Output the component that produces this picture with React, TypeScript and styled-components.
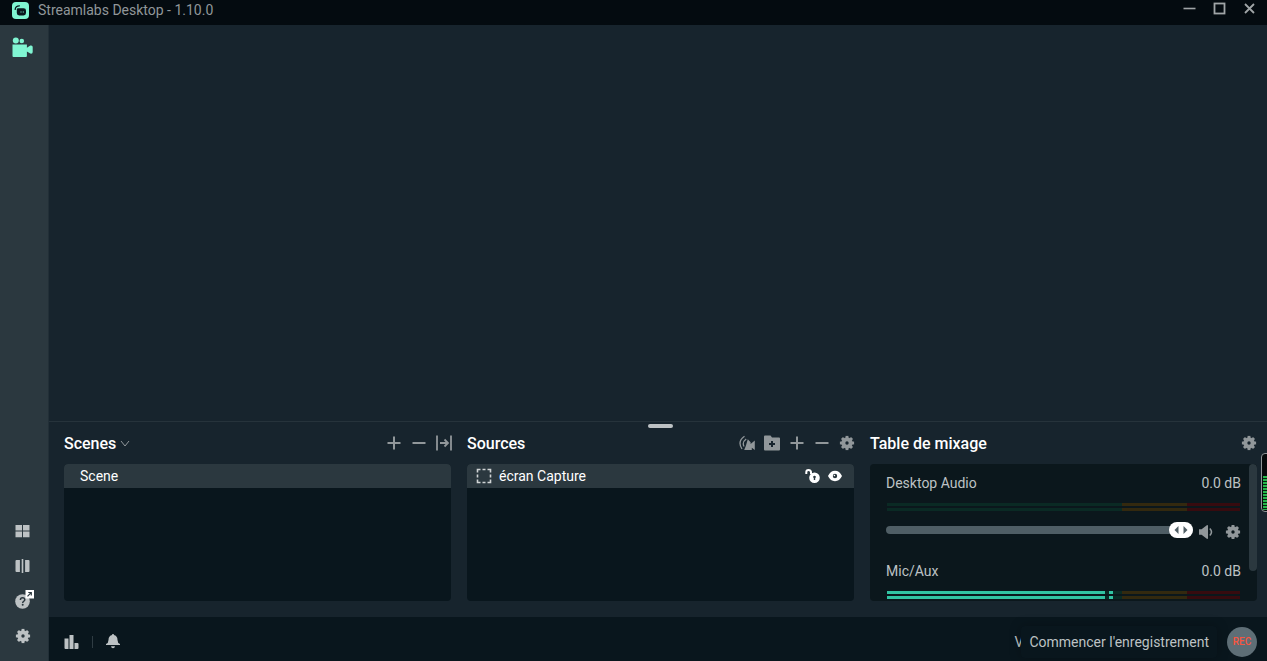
import React, { useState } from "react";
import styled, { createGlobalStyle } from "styled-components";

const color = {
  title: "#040b10",
  base: "#17242d",
  section: "#09161d",
  mixer: "#0b171c",
  raised: "#2b383f",
  icon: "#91979a",
  text: "#bdc2c4",
  teal: "#80f5d2",
};

const GlobalStyle = createGlobalStyle`
  * { box-sizing: border-box; }
  body {
    margin: 0;
    background: ${color.base};
    color: ${color.text};
    font: 400 14px/20px Roboto, "Liberation Sans", sans-serif;
  }
  svg { display: block; }
`;

const Window = styled.div`
  display: flex;
  flex-direction: column;
  min-height: 100vh;
  position: relative;
  overflow: hidden;
`;

const TitleBar = styled.header`
  display: flex;
  align-items: flex-start;
  justify-content: space-between;
  height: 25px;
  padding: 0 10px 0 12px;
  background: ${color.title};
`;

const Brand = styled.div`
  display: flex;
  align-items: center;
  gap: 9px;
  height: 20px;
  color: #91979a;
`;

const WindowControls = styled.div`
  display: flex;
  gap: 14px;
  height: 16px;
  align-items: center;
`;

const IconButton = styled.button<{ $color?: string; $size?: number }>`
  display: flex;
  align-items: center;
  justify-content: center;
  flex: none;
  width: ${(p) => p.$size ?? 16}px;
  height: ${(p) => p.$size ?? 16}px;
  padding: 0;
  border: 0;
  background: none;
  color: ${(p) => p.$color ?? color.icon};
  cursor: pointer;
`;

const Body = styled.div`
  display: flex;
  flex: 1;
`;

const SideNav = styled.nav`
  display: flex;
  flex-direction: column;
  justify-content: space-between;
  align-items: center;
  flex: none;
  width: 49px;
  padding: 11px 2px 14px 0;
  background: ${color.raised};
  border-right: 1px solid #222f37;
`;

const NavGroup = styled.div`
  display: flex;
  flex-direction: column;
  gap: 13px;
`;

const Main = styled.main`
  display: flex;
  flex-direction: column;
  flex: 1;
  min-width: 0;
`;

const Preview = styled.section`
  flex: 1;
  border-bottom: 1px solid #26333b;
`;

const Panels = styled.div`
  position: relative;
  display: grid;
  grid-template-columns: repeat(3, minmax(0, 1fr));
  gap: 16px;
  padding: 0 10px 16px 15px;
`;

const ResizeHandle = styled.div`
  position: absolute;
  top: 2px;
  left: 15px;
  right: 10px;
  width: 25px;
  height: 4px;
  margin: 0 auto;
  border-radius: 2px;
  background: #bdc2c4;
`;

const PanelHead = styled.div`
  display: flex;
  align-items: center;
  height: 42px;
`;

const PanelTitle = styled.h2`
  display: flex;
  align-items: center;
  gap: 4px;
  flex: 1;
  margin: 0;
  padding-top: 2px;
  color: #fff;
  font-size: 16px;
  font-weight: 500;
`;

const Tools = styled.div`
  display: flex;
  gap: 9px;
  margin-right: -1px;
`;

const List = styled.ul`
  height: 137px;
  margin: 0;
  padding: 0;
  list-style: none;
  overflow: hidden;
  border-radius: 4px;
  background: ${color.section};
`;

const ListRow = styled.li<{ $indent: number }>`
  display: flex;
  align-items: center;
  gap: 7px;
  height: 24px;
  padding: 0 11px 0 ${(p) => p.$indent}px;
  background: ${color.raised};
  color: #fff;
`;

const RowLabel = styled.span`
  flex: 1;
`;

const Mixer = styled.div`
  position: relative;
  height: 137px;
  padding: 9px 16px 0;
  overflow: hidden;
  border-radius: 4px;
  background: ${color.mixer};
`;

const ScrollThumb = styled.div`
  position: absolute;
  top: 0;
  right: 0;
  width: 8px;
  height: 107px;
  border-radius: 4px;
  background: ${color.raised};
`;

const Channel = styled.div`
  height: 88px;
`;

const ChannelHead = styled.div`
  display: flex;
  justify-content: space-between;
`;

const Meter = styled.div`
  display: flex;
  flex-direction: column;
  gap: 2px;
  padding: 10px 1px 11px 1px;
`;

const MeterTrack = styled.div`
  height: 3px;
  background: linear-gradient(
    to right,
    #0a2a24 0 66.5%,
    #33290f 66.5% 85%,
    #370b0f 85%
  );
`;

const MeterLevel = styled.div`
  height: 3px;
  background: linear-gradient(
    to right,
    #31c3a2 0 calc(100% - 8px),
    transparent calc(100% - 8px) calc(100% - 4px),
    #31c3a2 calc(100% - 4px)
  );
`;

const SliderRow = styled.div`
  display: flex;
  align-items: center;
  height: 16px;
`;

const SliderBox = styled.div`
  position: relative;
  flex: 1;
  height: 16px;
  margin-right: 5px;
`;

const Slider = styled.input`
  appearance: none;
  display: block;
  width: 100%;
  height: 16px;
  margin: 0;
  background: none;
  cursor: pointer;
  &::-webkit-slider-runnable-track {
    height: 8px;
    border-radius: 4px;
    background: #4f5e65;
  }
  &::-webkit-slider-thumb {
    appearance: none;
    width: 24px;
    height: 16px;
    margin-top: -4px;
    border-radius: 8px;
    background: #fff;
  }
`;

const ThumbMark = styled.svg`
  position: absolute;
  top: 0;
  pointer-events: none;
`;

const SliderTools = styled.div`
  display: flex;
  gap: 11px;
  padding-top: 3px;
`;

const Footer = styled.footer`
  display: flex;
  align-items: center;
  justify-content: space-between;
  height: 44px;
  padding: 6px 10px 0 15px;
  background: ${color.section};
`;

const FooterGroup = styled.div`
  display: flex;
  align-items: center;
`;

const Divider = styled.span`
  width: 1px;
  height: 12px;
  margin: 0 12px;
  background: #2f3c43;
`;

const Tooltip = styled.div`
  position: relative;
  height: 32px;
  padding: 0 8px;
  border-radius: 4px;
  background: ${color.section};
  box-shadow: 0 0 12px rgba(0, 0, 0, 0.25);
  font-size: 14px;
  line-height: 32px;
`;

const StatusLabel = styled.span`
  margin-right: -2px;
`;

const RecButton = styled.button`
  width: 30px;
  height: 30px;
  margin-left: 10px;
  padding: 0;
  border: 0;
  border-radius: 50%;
  background: #5e6e76;
  color: #f85640;
  font: 500 10px/28px Roboto, "Liberation Sans", sans-serif;
  cursor: pointer;
`;

const LevelOverlay = styled.div`
  position: absolute;
  top: 453px;
  right: -6px;
  width: 12px;
  height: 59px;
  padding: 22px 0 1px 1px;
  border: 1px solid #8d9497;
  border-radius: 4px;
  background: #05090b;
`;

const LevelBars = styled.div`
  height: 100%;
  background: repeating-linear-gradient(#26b84c 0 2px, #05210d 2px 3px);
`;

const Gear = ({ size = 16 }: { size?: number }) => (
  <svg width={size} height={size} viewBox="0 0 16 16" stroke="currentColor" fill="none">
    <circle cx="8" cy="8" r="3.7" strokeWidth="4" />
    {[0, 45, 90, 135, 180, 225, 270, 315].map((a) => (
      <path key={a} d="M8 3.4V.9" strokeWidth="2.9" transform={`rotate(${a} 8 8)`} />
    ))}
  </svg>
);

const Plus = () => (
  <svg width="16" height="16" viewBox="0 0 16 16" fill="currentColor">
    <path d="M7 1.5h2V7h5.5v2H9v5.5H7V9H1.5V7H7z" />
  </svg>
);

const Minus = () => (
  <svg width="16" height="16" viewBox="0 0 16 16" fill="currentColor">
    <path d="M1.5 7h13v2h-13z" />
  </svg>
);

const Transition = () => (
  <svg width="16" height="16" viewBox="0 0 16 16" fill="none" stroke="currentColor" strokeWidth="1.8">
    <path d="M1 .5v15M15 .5v15M4 8h8M8.5 4.500 12 8l-3.500 3.500" />
  </svg>
);

const Logo = () => (
  <svg width="17" height="17" viewBox="0 0 17 17">
    <rect width="17" height="17" rx="4" fill="#80f5d2" />
    <path d="M3.2 7.4C3.200 5 5 3.800 7.400 3.800" stroke="#09161d" strokeWidth="1.3" fill="none" strokeLinecap="round" />
    <path d="M5.4 6.2h6.2a2.4 2.4 0 0 1 2.4 2.4V11a2.4 2.4 0 0 1-2.4 2.4H7.2A2.4 2.4 0 0 1 4.8 11V7.4z" fill="#09161d" />
    <path d="M9 9.500v1M11.300 9.500v1" stroke="#80f5d2" strokeWidth="1.1" />
  </svg>
);

const Camera = () => (
  <svg width="22" height="22" viewBox="0 0 22 22" fill="currentColor">
    <circle cx="3.8" cy="4.5" r="3" />
    <circle cx="9.8" cy="5" r="2.3" />
    <path d="M.5 8.600h14.400v3.200l3.400-2.300q2.400-.5 2.400 1.600v5q0 2-2.400 1.500l-3.400-2.200v4.700q0 1-1 1H1.500q-1 0-1-1z" />
  </svg>
);

const Help = () => (
  <svg width="22" height="22" viewBox="0 0 22 22">
    <circle cx="10.500" cy="11.500" r="7.300" fill="currentColor" />
    <path d="M8.400 9.900c0-1.400.9-2.200 2.200-2.200s2.200.8 2.200 2c0 1.500-2.100 1.600-2.100 3.200" stroke="#2b383f" strokeWidth="1.500" fill="none" />
    <circle cx="10.700" cy="14.800" r="1" fill="#2b383f" />
    <rect x="13.500" y="0" width="8.500" height="8.500" fill="#fff" />
    <path d="M15.500 6.400l3.600-3.800M16.300 2.500h3v3" stroke="#2b383f" strokeWidth="1.200" fill="none" />
  </svg>
);

const Speaker = () => (
  <svg width="16" height="16" viewBox="0 0 16 16" fill="currentColor">
    <path d="M1 5.200h2.600L8.800 1.200Q10 .8 10 2v12q0 1.200-1.200.8L3.600 10.800H1z" />
    <path d="M11.800 4.500q3.400 3.500 0 7" stroke="currentColor" strokeWidth="1.500" fill="none" />
  </svg>
);

export default function App() {
  const [volume, setVolume] = useState(100);
  const [mic, setMic] = useState(100);

  const channels = [
    { name: "Desktop Audio", value: volume, set: setVolume, level: 0 },
    { name: "Mic/Aux", value: mic, set: setMic, level: 64 },
  ];

  return (
    <Window>
      <GlobalStyle />
      <TitleBar>
        <Brand>
          <Logo />
          <span>Streamlabs Desktop - 1.10.0</span>
        </Brand>
        <WindowControls>
          <IconButton aria-label="Réduire" $color="#a0a5a7">
            <svg width="16" height="16" viewBox="0 0 16 16"><path d="M2.500 8.500h12" stroke="currentColor" strokeWidth="1.600" /></svg>
          </IconButton>
          <IconButton aria-label="Agrandir" $color="#a0a5a7">
            <svg width="16" height="16" viewBox="0 0 16 16"><rect x="3.500" y="3.500" width="10" height="10" fill="none" stroke="currentColor" strokeWidth="1.800" /></svg>
          </IconButton>
          <IconButton aria-label="Fermer" $color="#a0a5a7">
            <svg width="16" height="16" viewBox="0 0 16 16"><path d="m4 4 9 9m0-9-9 9" stroke="currentColor" strokeWidth="1.800" /></svg>
          </IconButton>
        </WindowControls>
      </TitleBar>

      <Body>
        <SideNav>
          <IconButton aria-label="Éditeur" $size={22} $color={color.teal}>
            <Camera />
          </IconButton>
          <NavGroup>
            <IconButton aria-label="Disposition" $size={22} $color={color.text}>
              <svg width="22" height="22" viewBox="0 0 22 22" fill="currentColor">
                <path d="M3.500 5H10v5.600H3.500zM11 5h6.500v5.600H11zM3.500 11.600H10v5.600H3.500zM11 11.600h6.500v5.600H11z" />
              </svg>
            </IconButton>
            <IconButton aria-label="Studio" $size={22} $color={color.text}>
              <svg width="22" height="22" viewBox="0 0 22 22" fill="currentColor">
                <path d="M4.500 5h3.400v12H4.500q-1 0-1-1V6q0-1 1-1zM9.700 4h1.600v14H9.700zM13.100 5h3.400q1 0 1 1v10q0 1-1 1h-3.400z" />
              </svg>
            </IconButton>
            <IconButton aria-label="Aide" $size={22} $color={color.text}>
              <Help />
            </IconButton>
            <IconButton aria-label="Paramètres" $size={22} $color={color.text}>
              <Gear />
            </IconButton>
          </NavGroup>
        </SideNav>

        <Main>
          <Preview aria-label="Aperçu" />
          <Panels>
            <ResizeHandle />
            <section>
              <PanelHead>
                <PanelTitle>
                  Scenes
                  <svg width="10" height="10" viewBox="0 0 10 10"><path d="m1 2 4 5 4-5" fill="none" stroke="#91979a" /></svg>
                </PanelTitle>
                <Tools>
                  <IconButton aria-label="Ajouter une scène"><Plus /></IconButton>
                  <IconButton aria-label="Supprimer la scène"><Minus /></IconButton>
                  <IconButton aria-label="Transitions"><Transition /></IconButton>
                </Tools>
              </PanelHead>
              <List>
                <ListRow $indent={16}><RowLabel>Scene</RowLabel></ListRow>
              </List>
            </section>

            <section>
              <PanelHead>
                <PanelTitle>Sources</PanelTitle>
                <Tools>
                  <IconButton aria-label="Enregistrement sélectif">
                    <svg width="16" height="16" viewBox="0 0 16 16" fill="currentColor">
                      <path d="M5.500 1.300Q-2 6.500 3 14M7.200 4Q2.800 7.200 5 11.500" stroke="currentColor" strokeWidth="1.300" fill="none" />
                      <path d="M8.800 4.300l2.800 3v1.700l4.200-3.600v9.600l-3-2.200v2.200H5.200l1.600-4z" />
                    </svg>
                  </IconButton>
                  <IconButton aria-label="Ajouter un dossier">
                    <svg width="16" height="16" viewBox="0 0 16 16" fill="currentColor">
                      <path fillRule="evenodd" d="M1 .5h5.500l1.500 2h7q1 0 1 1v11q0 1-1 1H1q-1 0-1-1v-13q0-1 1-1zM7 6v2H5v2h2v2h2v-2h2V8H9V6z" />
                    </svg>
                  </IconButton>
                  <IconButton aria-label="Ajouter une source"><Plus /></IconButton>
                  <IconButton aria-label="Supprimer la source"><Minus /></IconButton>
                  <IconButton aria-label="Propriétés de la source"><Gear /></IconButton>
                </Tools>
              </PanelHead>
              <List>
                <ListRow $indent={9}>
                  <svg width="16" height="16" viewBox="0 0 16 16" fill="none" stroke="#d0d4d5" strokeWidth="1.600">
                    <path d="M1.500 4.500v-3h3M11.500 1.500h3v3M14.500 11.500v3h-3M4.500 14.500h-3v-3M6.500 1.500h3M6.500 14.500h3M1.500 6.500v3M14.500 6.500v3" />
                  </svg>
                  <RowLabel>écran Capture</RowLabel>
                  <IconButton aria-label="Verrouiller" $color="#fff">
                    <svg width="16" height="16" viewBox="0 0 16 16" fill="currentColor">
                      <path d="M2.300 6V4.200Q2.300 1.900 4.500 1.900T7 4v2" fill="none" stroke="currentColor" strokeWidth="2" />
                      <path fillRule="evenodd" d="M10.500 4.400a5.300 5.300 0 1 1 0 10.600A5.300 5.300 0 0 1 10.500 4.400zM9.100 9.200l.7.900v2h1.400v-2l.7-.9a1.400 1.400 0 1 0-2.800 0z" />
                    </svg>
                  </IconButton>
                  <IconButton aria-label="Masquer" $color="#fff">
                    <svg width="16" height="16" viewBox="0 0 16 16" fill="currentColor">
                      <path fillRule="evenodd" d="M1 8q2.500-5.200 7-5.200T15 8q-2.500 5.200-7 5.200T1 8zm7-2.200a2.200 2.200 0 1 0 0 4.400 2.200 2.200 0 0 0 0-4.400z" />
                      <circle cx="7.400" cy="7.500" r=".8" />
                    </svg>
                  </IconButton>
                </ListRow>
              </List>
            </section>

            <section>
              <PanelHead>
                <PanelTitle>Table de mixage</PanelTitle>
                <IconButton aria-label="Paramètres audio"><Gear /></IconButton>
              </PanelHead>
              <Mixer>
                {channels.map((c) => (
                  <Channel key={c.name}>
                    <ChannelHead>
                      <label htmlFor={c.name}>{c.name}</label>
                      <span>0.0 dB</span>
                    </ChannelHead>
                    <Meter>
                      {[0, 1].map((n) => (
                        <MeterTrack key={n}>
                          {c.level > 0 && <MeterLevel style={{ width: `${c.level}%` }} />}
                        </MeterTrack>
                      ))}
                    </Meter>
                    <SliderRow>
                      <SliderBox>
                        <Slider
                          id={c.name}
                          type="range"
                          value={c.value}
                          onChange={(e) => c.set(Number(e.target.value))}
                        />
                        <ThumbMark
                          width="24"
                          height="16"
                          viewBox="0 0 24 16"
                          fill="#4f5e65"
                          style={{ left: `calc((100% - 24px) * ${c.value / 100})` }}
                        >
                          <path d="M5.500 8l4-4v8zM18.500 8l-4-4v8z" />
                        </ThumbMark>
                      </SliderBox>
                      <SliderTools>
                        <IconButton aria-label={`Couper ${c.name}`}><Speaker /></IconButton>
                        <IconButton aria-label={`Réglages ${c.name}`}><Gear /></IconButton>
                      </SliderTools>
                    </SliderRow>
                  </Channel>
                ))}
                <ScrollThumb />
              </Mixer>
            </section>
          </Panels>

          <Footer>
            <FooterGroup>
              <IconButton aria-label="Performances" $color={color.text}>
                <svg width="16" height="16" viewBox="0 0 16 16" fill="currentColor">
                  <path d="M.5 4.500h4V15h-3q-1 0-1-1zM5.500 1h4v14h-4zM10.500 9h3q1 0 1 1v4q0 1-1 1h-3z" />
                </svg>
              </IconButton>
              <Divider />
              <IconButton aria-label="Notifications" $color={color.text}>
                <svg width="16" height="16" viewBox="0 0 16 16" fill="currentColor">
                  <path d="M7.200 0h1.600v1Q12.500 1.800 12.500 6q0 3 2.500 4v1H1v-1q2.500-1 2.500-4 0-4.200 3.700-5zM6 12.300h4Q9.700 14.300 8 14.300T6 12.300z" />
                </svg>
              </IconButton>
            </FooterGroup>
            <FooterGroup>
              <StatusLabel>V</StatusLabel>
              <Tooltip role="tooltip">Commencer l'enregistrement</Tooltip>
              <RecButton>REC</RecButton>
            </FooterGroup>
          </Footer>
        </Main>
      </Body>

      <LevelOverlay>
        <LevelBars />
      </LevelOverlay>
    </Window>
  );
}
